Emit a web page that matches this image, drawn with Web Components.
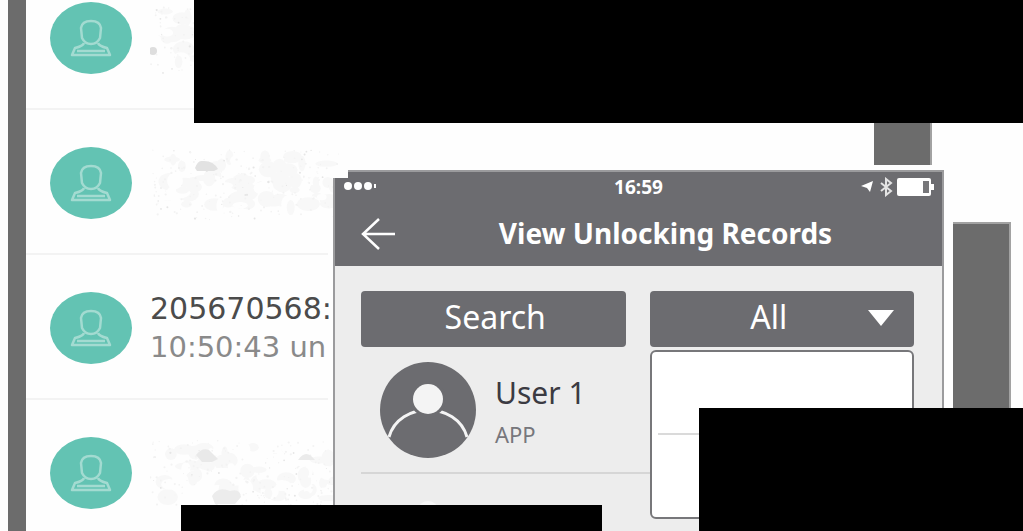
<!DOCTYPE html>
<html lang="en">
<head>
<meta charset="utf-8">
<title>Unlocking Records</title>
<style>
html,body{margin:0;min-height:100%;background:#fefefe}
body{font-family:"Noto Sans","Open Sans",sans-serif;overflow:hidden}
</style>
</head>
<body>
<records-board></records-board>
<script>
function define(name, markup, setup) {
  const template = document.createElement('template');
  template.innerHTML = markup;
  customElements.define(name, class extends HTMLElement {
    constructor() {
      super();
      this.attachShadow({ mode: 'open' }).append(template.content.cloneNode(true));
    }
    connectedCallback() { if (setup) setup(this.shadowRoot, this); }
  });
}

/* Faded, erased text: pale blobs with fine specks */
define('erased-text', `
<style>
:host{display:block;width:200px;height:90px}
svg{display:block;width:100%;height:100%}
</style>
<svg viewBox="0 0 200 90" aria-hidden="true"></svg>`, (root, host) => {
  let seed = Number(host.getAttribute('seed')) || 1;
  const rnd = () => (seed = (seed * 16807) % 2147483647) / 2147483647;
  let out = '';
  for (let i = 0; i < 90; i++) {
    out += `<ellipse cx="${(14 + rnd() * 176).toFixed(1)}" cy="${(18 + rnd() * 52).toFixed(1)}" rx="${(3 + rnd() * 9).toFixed(1)}" ry="${(3 + rnd() * 6).toFixed(1)}" fill="${rnd() > .4 ? '#f8f8f8' : '#fefefe'}"/>`;
  }
  for (let i = 0; i < 190; i++) {
    out += `<circle cx="${(rnd() * 192).toFixed(1)}" cy="${(12 + rnd() * 70).toFixed(1)}" r="${(.5 + rnd() * .7).toFixed(1)}" fill="${rnd() > .85 ? '#e6e6e6' : '#f3f3f3'}"/>`;
  }
  const marks = {
    dot: '<ellipse cx="3" cy="58" rx="4" ry="4" fill="#dedede"/>',
    hill: '<path d="M45 30Q48 22 52 23Q63 22 68 31L64 33H47Z" fill="#e2e2e2"/>',
    hills: '<path d="M46 27Q52 19 59 22L68 31L62 34H52Z" fill="#e9e9e9"/><path d="M62 68Q68 58 80 63Q90 60 91 69L85 76H65Z" fill="#ececec"/><path d="M148 32Q156 20 165 32Z" fill="#ebebeb"/>'
  };
  root.querySelector('svg').innerHTML = out + (marks[host.getAttribute('mark')] || '');
});

define('record-row', `
<style>
:host{display:flex;align-items:center;gap:18px;box-sizing:border-box;height:145px;padding:2px 0 0 24px;border-bottom:2px solid #f3f3f3}
svg{flex:none;display:block;width:82px;height:74px}
.text{flex:none;font:30px/38px "DejaVu Sans",sans-serif;color:#4b4b4b;white-space:nowrap}
</style>
<svg viewBox="0 0 82 74" aria-hidden="true">
<ellipse cx="41" cy="37" rx="41" ry="36" fill="#63c3b3"/>
<g fill="none" stroke="#a3dbd1" stroke-width="2.5" stroke-linejoin="round">
<path d="M31 27Q32 20 41 20Q50 20 51 27L50 37Q47 43 41 43Q35 43 32 37Z"/>
<path d="M34 42Q33 45 25 47L22 54H60L57 47Q49 45 48 42"/><path d="M27 50H55"/>
</g></svg>
<div class="text"><slot></slot></div>`);

define('records-list', `
<style>
:host{display:block;margin:-35px 5px 0 8px;border-left:18px solid #6c6c6c;height:580px}
.sub{display:block;font-size:29px;color:#8a8a8a}
</style>
<record-row><erased-text seed="11" mark="dot"></erased-text></record-row>
<record-row><erased-text seed="77" mark="hill"></erased-text></record-row>
<record-row>205670568:<span class="sub">10:50:43 un</span></record-row>
<record-row><erased-text seed="431" mark="hills"></erased-text></record-row>`);

define('phone-header', `
<style>
:host{display:block;height:94px;background:#6c6c70;color:#fff}
.status{display:grid;grid-template-columns:1fr auto 1fr;align-items:center;height:29px;padding:0 8px;font:bold 19px/28px "Noto Sans",sans-serif}
.status svg:last-child{justify-self:end}
svg{display:block}
.bar{display:grid;grid-template-columns:34px 1fr;align-items:center;padding:0 26px;height:64px}
button{padding:0;border:0;background:none;color:inherit}
h1{margin:0;padding-left:20px;text-align:center;font:bold 28px/36px "Noto Sans",sans-serif;white-space:nowrap}
</style>
<div class="status">
<svg width="36" height="12" viewBox="0 0 36 12" fill="#fff" aria-hidden="true"><circle cx="5" cy="5" r="4"/><circle cx="15" cy="5" r="4"/><circle cx="25" cy="5" r="4"/><path d="M31 3h2v4h-2z"/></svg>
<span>16:59</span>
<svg width="74" height="20" viewBox="0 0 74 20" fill="none" aria-hidden="true">
<path d="M1 9L13 4L10 15L7 11Z" fill="#fff"/>
<path d="M21 6L31 14L26 18V2L31 6L21 14" stroke="#e4e4e4" stroke-width="2"/>
<rect x="37" y="1" width="34" height="18" rx="2" fill="#fff"/><rect x="63" y="4" width="6" height="12" fill="#77777a"/><path d="M71 7h3v6h-3z" fill="#fff"/></svg>
</div>
<div class="bar">
<button type="button" aria-label="Back"><svg width="34" height="36" viewBox="0 0 34 36" fill="none" stroke="#fff" stroke-width="2.5"><path d="M34 19H2M18 4L2 19L18 34"/></svg></button>
<h1>View Unlocking Records</h1>
</div>`);

define('filter-bar', `
<style>
:host{display:grid;grid-template-columns:1fr 1fr;gap:24px}
button,select{display:block;box-sizing:border-box;width:100%;height:56px;margin:0;border:0;border-radius:4px;background:#6c6c70;color:#fff;font:32px/44px "Noto Sans",sans-serif}
button{padding:0 0 4px 4px}
select{appearance:none;padding:0 26px 4px 0;text-align:center;text-align-last:center}
.filter{position:relative}
.arrow{position:absolute;right:20px;top:18px;pointer-events:none}
.menu{position:absolute;top:59px;left:0;right:0;box-sizing:border-box;height:169px;padding:0 6px;border:2px solid #77777a;border-radius:6px;background:#fff}
.menu div{height:81px;border-bottom:2px solid #dadada}
</style>
<button type="button">Search</button>
<div class="filter">
<select aria-label="Record type"><option>All</option></select>
<svg class="arrow" width="26" height="18" aria-hidden="true"><path d="M0 1H26L13 17Z" fill="#fff"/></svg>
<div class="menu"><div></div></div>
</div>`);

define('user-row', `
<style>
:host{display:flex;align-items:center;gap:18px;box-sizing:border-box;height:127px;padding:2px 0 0 19px;border-bottom:2px solid #d6d6d6}
svg{display:block}
.name{font-size:30px;line-height:38px;color:#3b3b42}
.via{font-size:22px;line-height:28px;padding:8px 0 0;color:#77777c}
</style>
<svg width="97" height="97" viewBox="0 0 97 97" aria-hidden="true">
<circle cx="48" cy="48" r="48" fill="#6c6c70"/>
<path d="M9 75C19 39 77 39 87 75" fill="none" stroke="#f4f4f4" stroke-width="3"/>
<circle cx="48" cy="37" r="18" fill="#6c6c70"/><circle cx="48" cy="37" r="15" fill="#f4f4f4"/></svg>
<div><div class="name"><slot></slot></div><div class="via"><slot name="via"></slot></div></div>`);

define('phone-screen', `
<style>
:host{display:block;position:relative;background:#ededed;border:2px solid #9b9b9d;border-bottom:0;height:360px}
.corner{position:absolute;left:-2px;top:-2px;width:15px;height:8px;background:#fefefe}
.content{padding:25px 28px 0 26px}
.next{height:60px;margin:27px 0 0 50px;width:34px;border-radius:50%;background:#f7f7f7}
</style>
<phone-header></phone-header>
<div class="corner"></div>
<div class="content">
<filter-bar></filter-bar>
<user-row>User 1<span slot="via">APP</span></user-row>
<div class="next"></div>
</div>`);

define('records-board', `
<style>
:host{display:grid;position:relative;grid-template-columns:minmax(0,333fr) minmax(0,611fr) 79px;height:100vh;min-height:531px;overflow:hidden;background:#fefefe}
.center{display:flex;flex-direction:column;gap:5px;padding-top:123px}
.post{box-sizing:border-box;width:58px;background:#6c6c6c;border-right:2px solid #a2a2a2}
.upper{height:42px;align-self:flex-end;margin-right:12px}
.lower{height:300px;margin:222px 0 0 9px;border-top:2px solid #a2a2a2}
.mask{position:absolute;background:#000}
.one{left:194px;right:0;top:0;height:123px}
.two{left:181px;width:421px;bottom:0;height:26px}
.three{right:0;width:324px;bottom:0;height:123px}
</style>
<records-list></records-list>
<div class="center"><div class="post upper"></div><phone-screen></phone-screen></div>
<div class="post lower"></div>
<div class="mask one"></div><div class="mask two"></div><div class="mask three"></div>`);
</script>
</body>
</html>
